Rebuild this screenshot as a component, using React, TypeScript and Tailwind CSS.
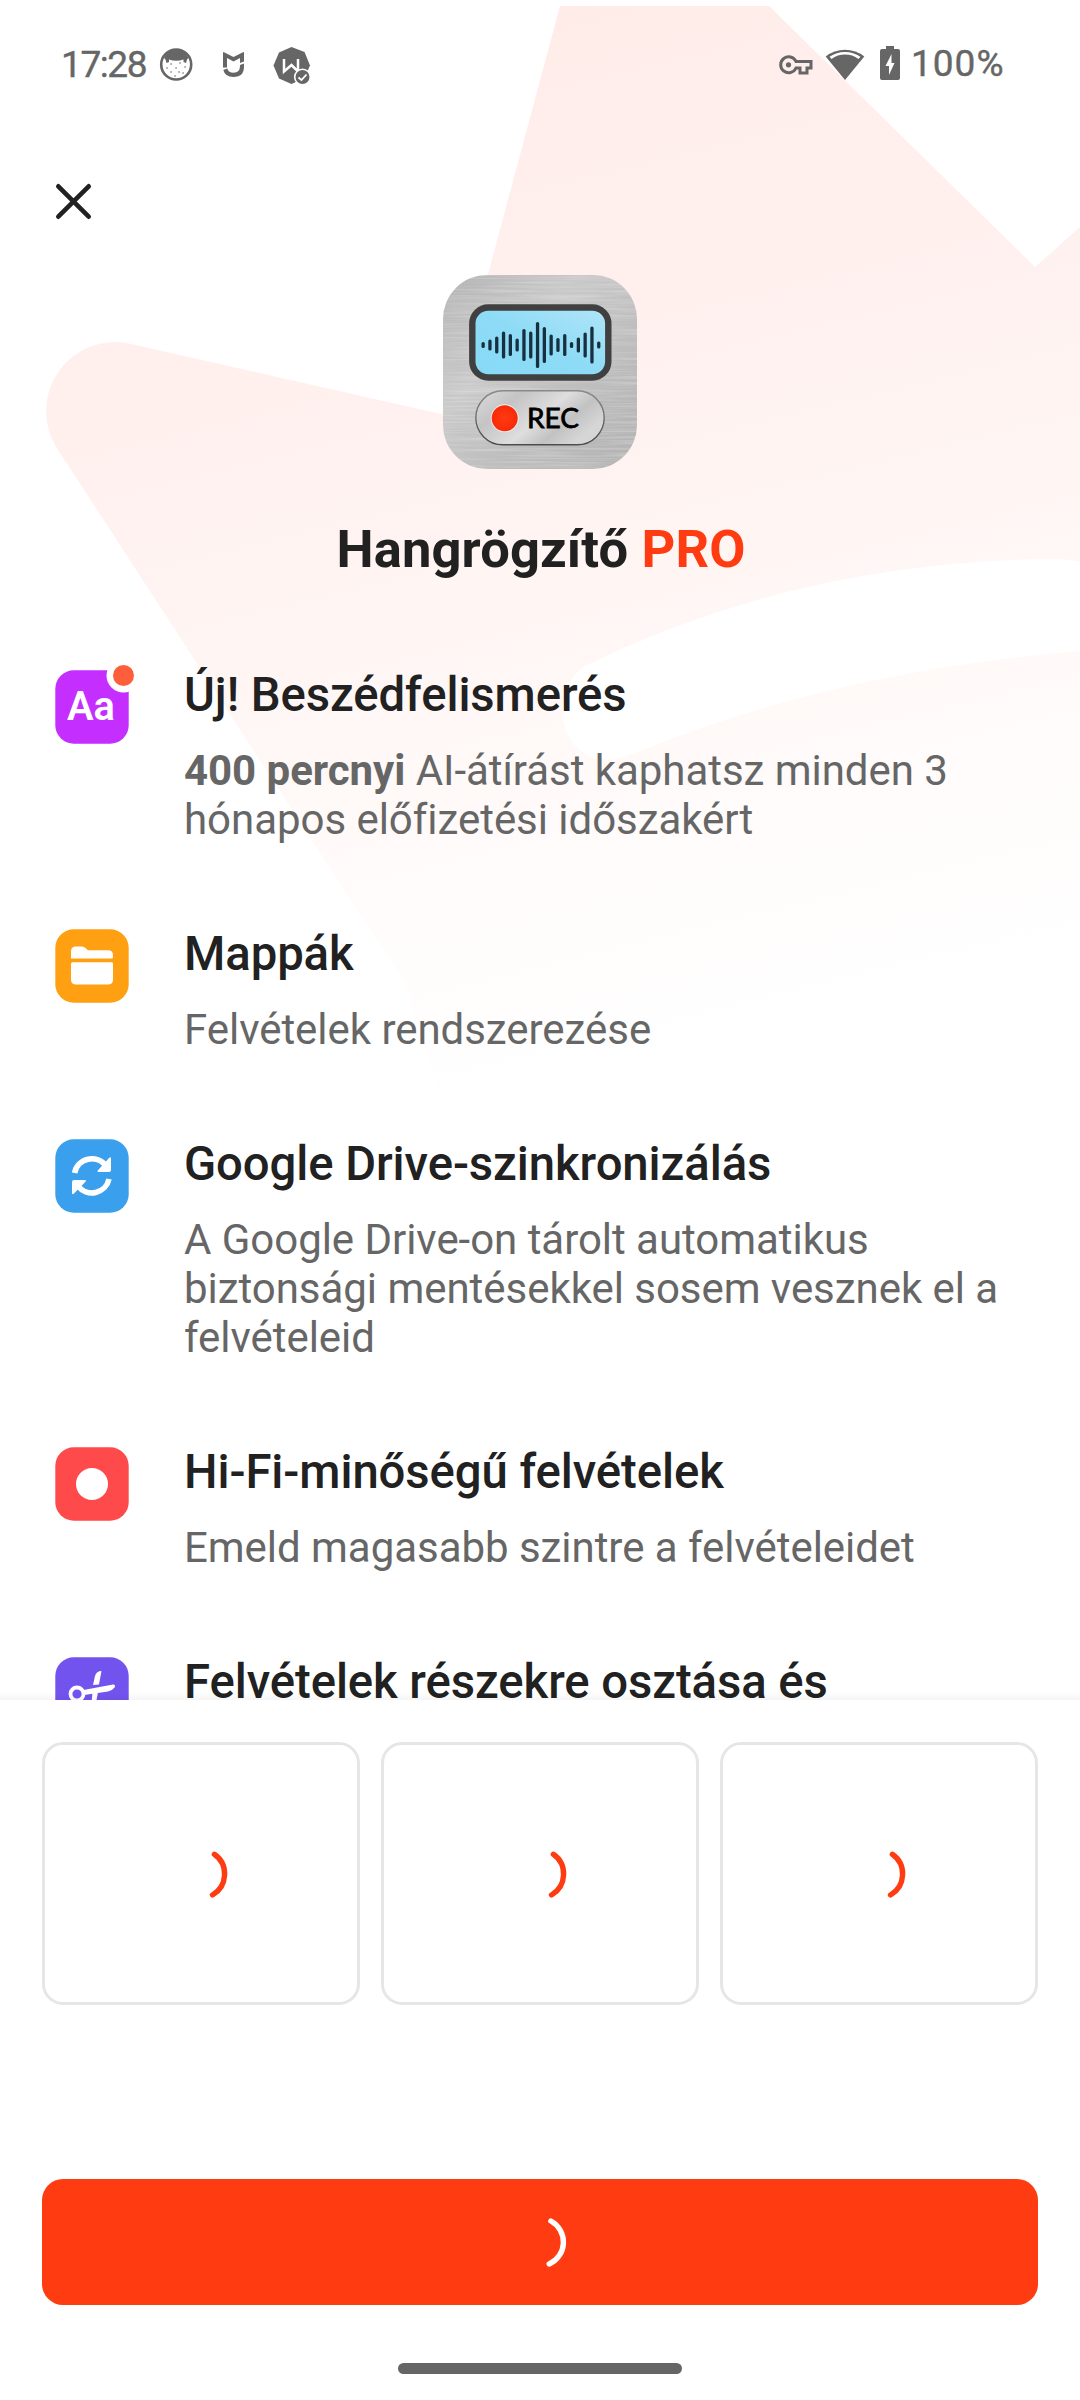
import React from "react";

type Feature = {
  title: string;
  icon: React.ReactNode;
  body?: React.ReactNode;
};

/* Large faded crown behind the header */
function CrownBackdrop() {
  return (
    <svg className="absolute left-0 top-0" width="1080" height="1200" viewBox="0 0 1080 1200" fill="none">
      <defs>
        <linearGradient id="crown" gradientUnits="userSpaceOnUse" x1="500" y1="0" x2="755" y2="1050">
          <stop offset="0" stopColor="#ffece9" />
          <stop offset="0.35" stopColor="#fff1ef" />
          <stop offset="0.6" stopColor="#fff7f5" />
          <stop offset="0.8" stopColor="#fffcfb" />
          <stop offset="1" stopColor="#ffffff" />
        </linearGradient>
      </defs>
      <path
        fill="url(#crown)"
        d="M560 6H769L1035 267L1080 227V1100H440L406 985L57.300 448.700A69 69 0 0 1 130.200 343.700L450 416Z"
      />
      <path
        fill="#fff"
        d="M585 666C740 590 900 560 1054 559Q1070 559 1080 562V651C930 664 790 692 650 747C620 760 600 764 585 754C572 746 563 730 563 715C563 694 571 674 585 666Z"
      />
    </svg>
  );
}

function StatusBar() {
  return (
    <div className="flex h-[130px] items-start justify-between pl-[61px] pr-[75px] text-[#666]">
      <div className="flex pt-[43px]">
        <span className="w-[93px] text-[37px] leading-[43px] tracking-[-1.4px] [-webkit-text-stroke:0.4px_#666]">17:28</span>
        <svg className="ml-[5px] mt-[4px]" width="35" height="35" viewBox="0 0 35 35" fill="none">
          <circle cx="17.2" cy="17.5" r="15" stroke="currentColor" strokeWidth="2.6" />
          <path
            d="M5 11C8 4 13 2 17.200 2s9.200 2 12.200 9L28 12.500L27 16L24.500 15V12.500Q17 15 10 12.500V15L7.500 16L6.500 12.500Z"
            fill="currentColor"
          />
          <path
            d="M8 21h.1M12 17h.1M17 21h.1M21 16h.1M26 20h.1M12 25h.1M20 25h.1M16 29h.1M24 26h.1"
            stroke="currentColor"
            strokeWidth="1.5"
            strokeLinecap="round"
          />
        </svg>
        <svg className="ml-[29px] mt-[9px]" width="22" height="26" viewBox="0 0 22 26" fill="currentColor">
          <path d="M0 0.800Q0 -0.300 1 0.200L10.500 5L20 0.200Q21 -0.300 21 0.800V9.500L17 11V6L10.500 9.500L4 6V15.500H0Z" />
          <path d="M0.300 18L4.300 16.500Q5.500 20.800 10.500 20.800Q17 20.800 17 14V13L21 11.500V14.500Q21 25 10.500 25Q2 25 0.300 18Z" />
        </svg>
        <svg className="ml-[28px] mt-[4px]" width="38" height="38" viewBox="0 0 38 38">
          <path d="M18.500 0L31.500 5L37 18.500L31.500 31L18.500 37L6 31.500L.500 18.500L6 5.500Z" fill="currentColor" />
          <path d="M11 12V24.500L18.500 18L25 24.500V12" stroke="#fff" strokeWidth="2.500" fill="none" />
          <circle cx="29.500" cy="30" r="7.800" fill="currentColor" stroke="#fff" strokeWidth="1.600" />
          <path d="M25.500 30.500L28.500 33L33.500 27.500" stroke="#fff" strokeWidth="1.800" fill="none" />
        </svg>
      </div>
      <div className="flex pt-[42px]">
        <svg className="mt-[13px]" width="34" height="20" viewBox="0 0 34 20" fill="none" stroke="currentColor" strokeWidth="3">
          <path d="M17 6.500A8 8 0 1 0 17 13H21V18H28V13H32V6.500Z" />
          <circle cx="9.500" cy="9.800" r="2.600" fill="currentColor" stroke="none" />
        </svg>
        <svg className="ml-[12px] mt-[4px]" width="40" height="35" viewBox="0 0 40 35">
          <path d="M20 34L.700 10.500A31 31 0 0 1 39.300 10.500Z" fill="currentColor" />
          <path d="M4.500 10.800A28 28 0 0 1 35.500 10.800L33.500 13A23 23 0 0 0 6.500 13Z" fill="#fff" />
        </svg>
        <svg className="ml-[15px] mt-[4px]" width="20" height="35" viewBox="0 0 20 35">
          <path d="M6 0h8v3h4q2 0 2 2v27q0 2-2 2H2q-2 0-2-2V5q0-2 2-2h4z" fill="currentColor" />
          <path d="M11.500 8L5.500 20H9V29L14.500 17H11.500Z" fill="#fff" />
        </svg>
        <span className="ml-[11px] w-[94px] text-[37px] leading-[43px] tracking-[1px] [-webkit-text-stroke:0.4px_#666]">100%</span>
      </div>
    </div>
  );
}

const waveform = [6, 11, 17, 27, 22, 13, 32, 27, 46, 36, 21, 14, 22, 6, 15, 25, 37, 7];

function AppIcon() {
  return (
    <svg width="194" height="194" viewBox="0 0 194 194">
      <defs>
        <linearGradient id="metal" x1="0" y1="0" x2="1" y2="1">
          <stop offset="0" stopColor="#b4b4b4" />
          <stop offset="0.35" stopColor="#c9c9c9" />
          <stop offset="0.65" stopColor="#bdbdbd" />
          <stop offset="1" stopColor="#b2b2b2" />
        </linearGradient>
        <linearGradient id="screen" x1="0" y1="1" x2="1" y2="0">
          <stop offset="0" stopColor="#86daf6" />
          <stop offset="0.5" stopColor="#8edbf6" />
          <stop offset="1" stopColor="#b2e6f8" />
        </linearGradient>
        <linearGradient id="pill" x1="0" y1="0" x2="1" y2="0.5">
          <stop offset="0" stopColor="#dcdcdc" />
          <stop offset="0.3" stopColor="#c4c4c4" />
          <stop offset="0.6" stopColor="#dedede" />
          <stop offset="0.8" stopColor="#c2c2c2" />
          <stop offset="1" stopColor="#d6d6d6" />
        </linearGradient>
        <linearGradient id="rim" x1="0" y1="0" x2="0" y2="1">
          <stop offset="0" stopColor="#8a8a8a" />
          <stop offset="1" stopColor="#4c4c4c" />
        </linearGradient>
        <radialGradient id="dot">
          <stop offset="0" stopColor="#ff3a12" />
          <stop offset="1" stopColor="#f82a08" />
        </radialGradient>
        <filter id="brushed" x="0" y="0" width="1" height="1">
          <feTurbulence type="fractalNoise" baseFrequency="0.012 0.45" numOctaves="2" seed="4" />
          <feColorMatrix values="0 0 0 0 1  0 0 0 0 1  0 0 0 0 1  1.6 0 0 0 -0.6" />
        </filter>
        <clipPath id="tile">
          <rect width="194" height="194" rx="44" />
        </clipPath>
      </defs>
      <g clipPath="url(#tile)">
        <rect width="194" height="194" fill="url(#metal)" />
        <rect width="194" height="194" filter="url(#brushed)" opacity="0.35" />
      </g>
      <rect x="29.300" y="32.500" width="136" height="70" rx="16" fill="url(#screen)" stroke="#404040" strokeWidth="6.400" />
      {waveform.map((h, i) => (
        <rect key={i} x={38.5 + i * 6.8} y={70 - h / 2} width="3.300" height={h} rx="1.600" fill="#17303f" />
      ))}
      <rect x="32.800" y="115.800" width="128.400" height="54" rx="27" fill="url(#pill)" stroke="url(#rim)" strokeWidth="1.400" />
      <circle cx="61.700" cy="143.300" r="14" fill="#eee" />
      <circle cx="61.700" cy="143.300" r="13" fill="url(#dot)" />
      <text x="84" y="153.300" fontFamily="Lato, sans-serif" fontSize="27" fontWeight="400" stroke="#000" strokeWidth="0.800" textLength="52" lengthAdjust="spacingAndGlyphs">
        REC
      </text>
    </svg>
  );
}

function Tile({ color, children }: { color: string; children: React.ReactNode }) {
  return (
    <svg width="86" height="86" viewBox="0 -10 86 86" className="-mt-[10px] block" fill="none">
      <rect x="0.300" y="0.300" width="73.400" height="73.400" rx="18.500" fill={color} />
      {children}
    </svg>
  );
}

const features: Feature[] = [
  {
    title: "Új! Beszédfelismerés",
    icon: (
      <Tile color="#c42eff">
        <text x="12" y="50" fontFamily="Roboto, sans-serif" fontSize="40" fontWeight="600" fill="#fff" textLength="48" lengthAdjust="spacingAndGlyphs">
          Aa
        </text>
        <circle cx="68.500" cy="5.500" r="17" fill="#fff" />
        <circle cx="68.500" cy="5.500" r="10.500" fill="#ff5e3c" />
      </Tile>
    ),
    body: (
      <>
        <b className="font-bold">400 percnyi</b> AI-átírást kaphatsz minden 3<br />
        hónapos előfizetési időszakért
      </>
    ),
  },
  {
    title: "Mappák",
    icon: (
      <Tile color="#ffa013">
        <path d="M16 29.500V22.500Q16 17.500 21 17.500H27Q29 17.500 30.500 19L33 21.300H53Q58 21.300 58 26.300V28Q58 29.500 56.500 29.500Z" fill="#fff" />
        <path d="M17.500 33.300H56.500Q58 33.300 58 34.800V50.500Q58 55.500 53 55.500H21Q16 55.500 16 50.500V34.800Q16 33.300 17.500 33.300Z" fill="#fff" />
      </Tile>
    ),
    body: "Felvételek rendszerezése",
  },
  {
    title: "Google Drive-szinkronizálás",
    icon: (
      <Tile color="#3a9fec">
        <path d="M19.600 34A17.500 17.500 0 0 1 51 27" stroke="#fff" strokeWidth="5.600" />
        <path d="M54.500 18.500Q56 17.800 56 19.500V31Q56 33 54 33H43.500Q41.500 33 43 31.300Z" fill="#fff" />
        <path d="M54 40A17.500 17.500 0 0 1 23 47" stroke="#fff" strokeWidth="5.600" />
        <path d="M19 54.500Q17 56 17 54V43Q17 41 19 41H30Q32 41 30.500 42.700Z" fill="#fff" />
      </Tile>
    ),
    body: (
      <>
        A Google Drive-on tárolt automatikus
        <br />
        biztonsági mentésekkel sosem vesznek el a<br />
        felvételeid
      </>
    ),
  },
  {
    title: "Hi-Fi-minőségű felvételek",
    icon: (
      <Tile color="#ff4a4b">
        <circle cx="37" cy="37" r="16" fill="#fff" />
      </Tile>
    ),
    body: "Emeld magasabb szintre a felvételeidet",
  },
  {
    title: "Felvételek részekre osztása és",
    icon: (
      <Tile color="#7353ee">
        <circle cx="22" cy="37" r="6.500" stroke="#fff" strokeWidth="3.800" />
        <path d="M28.500 33L58 27.500Q61 27.500 59.500 30.500Q57.500 33.500 53 34.500L29 38Z" fill="#fff" />
        <path d="M38 28L40 19Q41.500 14 46.500 14L44 27.500Z" fill="#fff" />
        <path d="M37.500 35H43L41 46H36.500Z" fill="#fff" />
      </Tile>
    ),
  },
];

function Spinner({ arc = "M40.400 7.300A24.200 24.200 0 0 1 38.500 48" }: { arc?: string }) {
  return (
    <svg width="54" height="54" viewBox="0 0 54 54" fill="none">
      <path d={arc} stroke="currentColor" strokeWidth="5.400" strokeLinecap="round" />
    </svg>
  );
}

export default function App() {
  return (
    <div className="relative flex h-[2400px] w-[1080px] flex-col overflow-hidden bg-white font-[Roboto,sans-serif] text-[#212121]">
      <CrownBackdrop />
      <div className="relative h-[1700px] shrink-0 overflow-hidden">
        <StatusBar />
        <header className="flex flex-col">
          <button className="ml-[55px] mt-[53px] h-[37px] w-[37px]" aria-label="Bezárás">
            <svg width="37" height="37" viewBox="0 0 37 37" stroke="currentColor" strokeWidth="4.600" strokeLinecap="round">
              <path d="M3.300 3.300L33.700 33.700M33.700 3.300L3.300 33.700" />
            </svg>
          </button>
          <div className="mt-[55px] flex justify-center">
            <AppIcon />
          </div>
          <h1 className="mt-[49px] pl-[2px] text-center text-[52.500px] font-bold leading-[62px] tracking-[0.120px]">
            Hangrögzítő <span className="text-[#ff3b12]">PRO</span>
          </h1>
        </header>
        <ul className="mt-[87px] flex flex-col gap-[82px] pl-[55px]">
          {features.map((f) => (
            <li key={f.title} className="flex">
              <div className="w-[129px] shrink-0 pt-[2.600px]">{f.icon}</div>
              <div className="whitespace-nowrap">
                <h2 className="text-[47.250px] font-medium leading-[56px] tracking-[-0.070px]">{f.title}</h2>
                {f.body && <p className="mt-[23px] text-[42px] leading-[49px] tracking-[-0.040px] text-[#666]">{f.body}</p>}
              </div>
            </li>
          ))}
        </ul>
        <div className="absolute inset-x-0 bottom-0 h-[8px] bg-linear-to-b from-transparent to-black/4" />
      </div>
      <section className="relative flex grow flex-col bg-white px-[42px] pt-[42px]">
        <div className="grid grid-cols-3 gap-[21px] text-[#ff3b12]">
          {[0, 1, 2].map((i) => (
            <div key={i} className="flex h-[263px] items-center justify-center rounded-[21px] border-[3px] border-[#e6e6e6]">
              <Spinner />
            </div>
          ))}
        </div>
        <button className="mt-[174px] flex h-[126px] items-center justify-center rounded-[21px] bg-[#ff3b12] text-white" aria-label="Folytatás">
          <Spinner arc="M37.900 6A24 24 0 0 1 36.200 49" />
        </button>
        <div className="mt-[58px] h-[11px] w-[284px] self-center rounded-full bg-[#666]" />
      </section>
    </div>
  );
}
